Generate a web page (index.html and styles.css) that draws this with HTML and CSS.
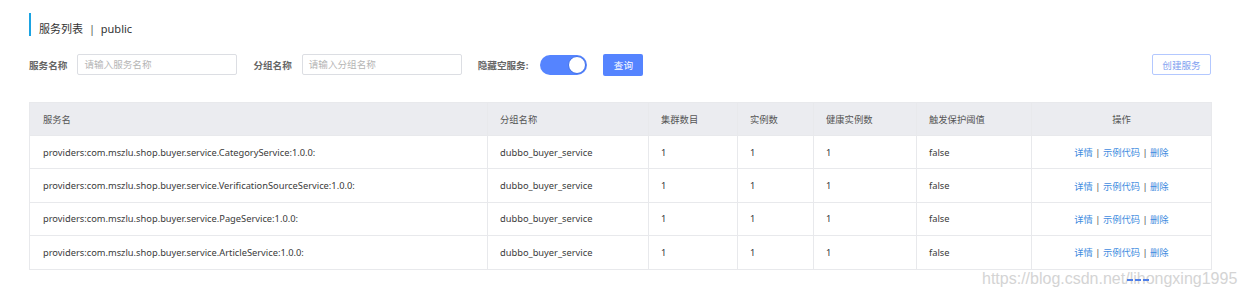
FILE: index.html
```html
<!DOCTYPE html>
<html lang="zh">
<head>
<meta charset="utf-8">
<link rel="stylesheet" href="styles.css">
</head>
<body>
<div class="page">
  <div class="title"><span class="title-text">服务列表 <span class="sep">|</span> public</span></div>
  <div class="filters">
    <div class="group">
      <span class="label">服务名称</span>
      <div class="input">请输入服务名称</div>
    </div>
    <div class="group">
      <span class="label">分组名称</span>
      <div class="input">请输入分组名称</div>
    </div>
    <div class="group">
      <span class="label">隐藏空服务:</span>
      <div class="toggle"><div class="knob"></div></div>
    </div>
    <button class="btn-primary">查询</button>
    <div class="spacer"></div>
    <button class="btn-ghost">创建服务</button>
  </div>
  <table class="grid">
    <colgroup>
      <col class="c1"><col class="c2"><col class="c3"><col class="c4"><col class="c5"><col class="c6"><col class="c7">
    </colgroup>
    <thead>
      <tr><th>服务名</th><th>分组名称</th><th>集群数目</th><th>实例数</th><th>健康实例数</th><th>触发保护阈值</th><th class="center">操作</th></tr>
    </thead>
    <tbody>
      <tr><td>providers:com.mszlu.shop.buyer.service.CategoryService:1.0.0:</td><td>dubbo_buyer_service</td><td>1</td><td>1</td><td>1</td><td>false</td><td class="center ops"><a>详情</a> | <a>示例代码</a> | <a>删除</a></td></tr>
      <tr><td>providers:com.mszlu.shop.buyer.service.VerificationSourceService:1.0.0:</td><td>dubbo_buyer_service</td><td>1</td><td>1</td><td>1</td><td>false</td><td class="center ops"><a>详情</a> | <a>示例代码</a> | <a>删除</a></td></tr>
      <tr><td>providers:com.mszlu.shop.buyer.service.PageService:1.0.0:</td><td>dubbo_buyer_service</td><td>1</td><td>1</td><td>1</td><td>false</td><td class="center ops"><a>详情</a> | <a>示例代码</a> | <a>删除</a></td></tr>
      <tr><td>providers:com.mszlu.shop.buyer.service.ArticleService:1.0.0:</td><td>dubbo_buyer_service</td><td>1</td><td>1</td><td>1</td><td>false</td><td class="center ops"><a>详情</a> | <a>示例代码</a> | <a>删除</a></td></tr>
    </tbody>
  </table>
  <div class="footer">
    <div class="dash"></div>
    <div class="watermark">https://blog.csdn.net/lihongxing1995</div>
  </div>
</div>
</body>
</html>
```

FILE: styles.css
```css
* { box-sizing: border-box; }
html, body { margin: 0; background: #fff; }
body {
  font-family: "Noto Sans", "Noto Sans CJK SC", sans-serif;
  color: #333;
  font-size: 10px;
}
.page {
  width: 1245px;
  height: 296px;
  padding: 13px 34px 0 29px;
  position: relative;
  overflow: hidden;
}
.title {
  height: 23px;
  border-left: 2px solid #1ba3e2;
  padding-left: 8px;
  display: flex;
  align-items: flex-end;
}
.title-text {
  font-size: 11px;
  line-height: 15px;
  color: #333;
}
.title .sep { margin: 0 3px; color: #555; }
.filters {
  display: flex;
  align-items: center;
  margin-top: 18px;
  height: 21px;
}
.group { display: flex; align-items: center; margin-right: 16px; }
.label {
  font-weight: bold;
  color: #666;
  font-size: 9.6px;
  margin-right: 10px;
}
.group:nth-child(3) .label { margin-right: 12px; }
.input {
  width: 160px;
  height: 21px;
  border: 1px solid #dcdee3;
  border-radius: 2px;
  padding-left: 6px;
  line-height: 19px;
  color: #b5b5b5;
  font-size: 9.6px;
}
.toggle {
  width: 47px;
  height: 20px;
  border-radius: 10px;
  background: #5584ff;
  display: flex;
  align-items: center;
  justify-content: flex-end;
  padding-right: 1px;
}
.knob {
  width: 18px;
  height: 18px;
  border-radius: 50%;
  background: #fff;
  border: 1px solid #3f6fe8;
}
.btn-primary {
  width: 40px;
  height: 22px;
  border: none;
  border-radius: 2px;
  background: #5584ff;
  color: #fff;
  font-family: inherit;
  font-size: 9.6px;
  padding: 0;
}
.spacer { flex: 1; }
.btn-ghost {
  width: 59px;
  height: 21px;
  border: 1px solid #b3c8ff;
  border-radius: 2px;
  background: #fff;
  color: #7f9ff0;
  font-family: inherit;
  font-size: 9.6px;
  padding: 0;
}
.grid {
  margin-top: 27px;
  width: 1182px;
  border-collapse: collapse;
  table-layout: fixed;
  border: 1px solid #e4e6ea;
}
.c1 { width: 458px; }
.c2 { width: 161px; }
.c3 { width: 89px; }
.c4 { width: 76px; }
.c5 { width: 103px; }
.c6 { width: 115px; }
.c7 { width: 180px; }
th, td {
  text-align: left;
  padding: 0 12px;
  font-size: 9.3px;
  font-weight: normal;
  white-space: nowrap;
  border: 1px solid #e8e9ec;
}
th {
  height: 33px;
  background: #ebecf0;
  color: #555;
}
td {
  height: 33.4px;
  color: #3a3a3a;
}
tr > :first-child { padding-left: 13px; }
.center { text-align: center; }
.ops { color: #555; }
.ops a { color: #3f8ce0; }
.footer {
  position: relative;
  height: 27px;
}
.watermark {
  position: absolute;
  left: 953px;
  top: 0;
  font-family: "Liberation Sans", sans-serif;
  font-size: 16px;
  color: #d4d4d4;
}
.dash {
  position: absolute;
  left: 1098px;
  top: 9px;
  width: 22px;
  height: 2px;
  border-top: 2px dashed #4f7fe8;
  z-index: 1;
}
```
